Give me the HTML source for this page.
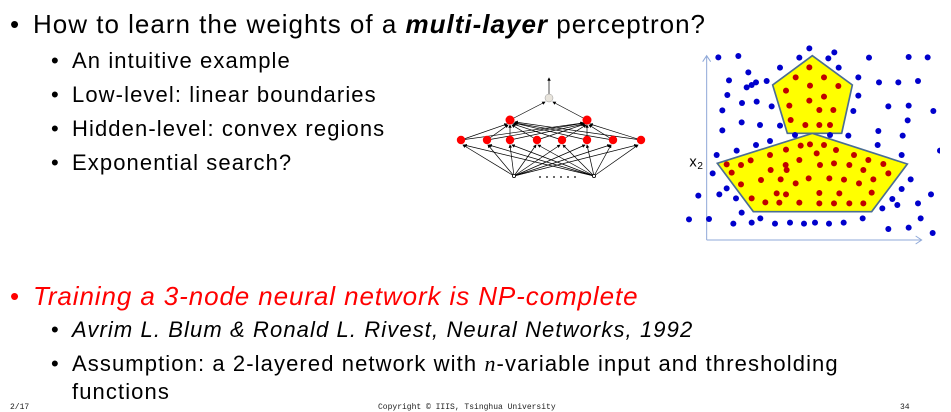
<!DOCTYPE html>
<html><head><meta charset="utf-8"><style>
html,body{margin:0;padding:0;background:#fff;}
body{width:951px;height:411px;position:relative;overflow:hidden;font-family:"Liberation Sans",sans-serif;color:#000;}
.t{position:absolute;white-space:nowrap;line-height:1;}
.b1{font-size:26px;letter-spacing:1px;}
.b2{font-size:22px;letter-spacing:1.1px;}
.ft{position:absolute;font-family:"Liberation Mono",monospace;font-size:8px;top:403px;color:#222;}
</style></head><body>
<div class="t b1" style="left:10px;top:11px;">•</div>
<div class="t b1" style="left:33px;top:11px;">How to learn the weights of a <b><i>multi-layer</i></b> perceptron?</div>
<div class="t b2" style="left:51px;top:50px;">•</div><div class="t b2" style="left:72px;top:50px;">An intuitive example</div>
<div class="t b2" style="left:51px;top:84px;">•</div><div class="t b2" style="left:72px;top:84px;">Low-level: linear boundaries</div>
<div class="t b2" style="left:51px;top:118px;">•</div><div class="t b2" style="left:72px;top:118px;">Hidden-level: convex regions</div>
<div class="t b2" style="left:51px;top:152px;">•</div><div class="t b2" style="left:72px;top:152px;">Exponential search?</div>

<div class="t b1" style="left:10px;top:283px;color:#f00;">•</div>
<div class="t b1" style="left:33px;top:283px;color:#f00;letter-spacing:0.9px;"><i>Training a 3-node neural network is NP-complete</i></div>
<div class="t b2" style="left:51px;top:319px;">•</div><div class="t b2" style="left:72px;top:319px;"><i>Avrim L. Blum &amp; Ronald L. Rivest, Neural Networks, 1992</i></div>
<div class="t b2" style="left:51px;top:353px;">•</div><div class="t b2" style="left:72px;top:353px;">Assumption: a 2-layered network with <i style="font-family:'Liberation Serif',serif;">n</i>-variable input and thresholding</div>
<div class="t b2" style="left:72px;top:381px;">functions</div>
<div class="ft" style="left:10px;">2/17</div>
<div class="ft" style="left:378px;">Copyright © IIIS, Tsinghua University</div>
<div class="ft" style="left:900px;">34</div>

<svg style="position:absolute;left:450px;top:70px" width="220" height="120" viewBox="0 0 220 120">
<defs><marker id="a" markerWidth="5" markerHeight="5" refX="4" refY="2.5" orient="auto"><path d="M0,0L5,2.5L0,5z" fill="#000"/></marker></defs>
<g stroke="#000" stroke-width="0.7" marker-end="url(#a)">
<line x1="99" y1="24" x2="99" y2="8"/>
<line x1="60" y1="50" x2="95" y2="32"/><line x1="137" y1="50" x2="103" y2="32"/>
<line x1="11" y1="70" x2="57" y2="54"/><line x1="37" y1="70" x2="58" y2="55"/><line x1="60" y1="70" x2="60" y2="55"/><line x1="87" y1="70" x2="62" y2="55"/><line x1="112" y1="70" x2="63" y2="54"/><line x1="137" y1="70" x2="64" y2="53"/><line x1="163" y1="70" x2="65" y2="53"/><line x1="191" y1="70" x2="65" y2="52"/>
<line x1="11" y1="70" x2="133" y2="53"/><line x1="37" y1="70" x2="134" y2="53"/><line x1="60" y1="70" x2="134" y2="54"/><line x1="87" y1="70" x2="135" y2="54"/><line x1="112" y1="70" x2="136" y2="55"/><line x1="137" y1="70" x2="137" y2="55"/><line x1="163" y1="70" x2="139" y2="55"/><line x1="191" y1="70" x2="140" y2="54"/>
<line x1="64" y1="106" x2="13" y2="75"/><line x1="64" y1="106" x2="38" y2="75"/><line x1="64" y1="106" x2="60" y2="75"/><line x1="64" y1="106" x2="86" y2="75"/><line x1="64" y1="106" x2="110" y2="75"/><line x1="64" y1="106" x2="135" y2="75"/><line x1="64" y1="106" x2="160" y2="75"/><line x1="64" y1="106" x2="187" y2="75"/>
<line x1="144" y1="106" x2="14" y2="75"/><line x1="144" y1="106" x2="39" y2="75"/><line x1="144" y1="106" x2="62" y2="75"/><line x1="144" y1="106" x2="88" y2="75"/><line x1="144" y1="106" x2="113" y2="75"/><line x1="144" y1="106" x2="137" y2="75"/><line x1="144" y1="106" x2="161" y2="75"/><line x1="144" y1="106" x2="188" y2="75"/>
</g>
<circle cx="99" cy="28" r="4" fill="#e8e4dc" stroke="#999" stroke-width="0.5"/>
<g fill="#f00"><circle cx="60" cy="50" r="4.5"/><circle cx="137" cy="50" r="4.5"/>
<circle cx="11" cy="70" r="4.2"/><circle cx="37" cy="70" r="4.2"/><circle cx="60" cy="70" r="4.2"/><circle cx="87" cy="70" r="4.2"/><circle cx="112" cy="70" r="4.2"/><circle cx="137" cy="70" r="4.2"/><circle cx="163" cy="70" r="4.2"/><circle cx="191" cy="70" r="4.2"/></g>
<circle cx="64" cy="106" r="1.6" fill="#fff" stroke="#000" stroke-width="0.8"/><circle cx="144" cy="106" r="1.6" fill="#fff" stroke="#000" stroke-width="0.8"/>
<g fill="#000"><circle cx="90" cy="107" r="0.9"/><circle cx="97" cy="107" r="0.9"/><circle cx="104" cy="107" r="0.9"/><circle cx="111" cy="107" r="0.9"/><circle cx="118" cy="107" r="0.9"/><circle cx="125" cy="107" r="0.9"/></g>
</svg>

<svg style="position:absolute;left:680px;top:35px" width="260" height="215" viewBox="0 0 780 645">
<g stroke="#8fa8d8" stroke-width="3" fill="none">
<path d="M80,615V62M68,80L80,62L92,80"/><path d="M80,615H725M707,603L725,615L707,627"/>
</g>
<text x="28" y="395" font-family="Liberation Sans,sans-serif" font-size="44">x</text><text x="52" y="402" font-family="Liberation Sans,sans-serif" font-size="30">2</text>
<g fill="#ffff00" stroke="#4a6d94" stroke-width="5">
<polygon points="397,62 517,150 485,295 322,295 278,150"/>
<polygon points="397,295 682,387 575,530 220,530 112,385"/>
</g>
<g fill="#0000cc">
<circle cx="115" cy="67" r="9"/><circle cx="175" cy="63" r="9"/><circle cx="388" cy="40" r="9"/><circle cx="463" cy="52" r="9"/><circle cx="445" cy="70" r="9"/><circle cx="358" cy="68" r="9"/><circle cx="567" cy="68" r="9"/><circle cx="686" cy="66" r="9"/><circle cx="743" cy="67" r="9"/><circle cx="205" cy="112" r="9"/><circle cx="300" cy="98" r="9"/><circle cx="476" cy="98" r="9"/><circle cx="147" cy="136" r="9"/><circle cx="228" cy="142" r="9"/><circle cx="215" cy="150" r="9"/><circle cx="200" cy="157" r="9"/><circle cx="260" cy="138" r="9"/><circle cx="535" cy="127" r="9"/><circle cx="597" cy="142" r="9"/><circle cx="655" cy="142" r="9"/><circle cx="714" cy="138" r="9"/><circle cx="142" cy="180" r="9"/><circle cx="186" cy="204" r="9"/><circle cx="230" cy="200" r="9"/><circle cx="275" cy="214" r="9"/><circle cx="535" cy="182" r="9"/><circle cx="520" cy="228" r="9"/><circle cx="625" cy="214" r="9"/><circle cx="686" cy="212" r="9"/><circle cx="760" cy="228" r="9"/><circle cx="127" cy="226" r="9"/><circle cx="185" cy="262" r="9"/><circle cx="240" cy="270" r="9"/><circle cx="300" cy="272" r="9"/><circle cx="683" cy="256" r="9"/><circle cx="127" cy="286" r="9"/><circle cx="595" cy="288" r="9"/><circle cx="668" cy="302" r="9"/><circle cx="505" cy="302" r="9"/><circle cx="450" cy="300" r="9"/><circle cx="345" cy="300" r="9"/><circle cx="270" cy="318" r="9"/><circle cx="228" cy="330" r="9"/><circle cx="170" cy="347" r="9"/><circle cx="593" cy="330" r="9"/><circle cx="110" cy="360" r="9"/><circle cx="665" cy="360" r="9"/><circle cx="780" cy="347" r="9"/><circle cx="98" cy="415" r="9"/><circle cx="140" cy="460" r="9"/><circle cx="118" cy="478" r="9"/><circle cx="55" cy="482" r="9"/><circle cx="168" cy="490" r="9"/><circle cx="665" cy="462" r="9"/><circle cx="692" cy="433" r="9"/><circle cx="753" cy="478" r="9"/><circle cx="637" cy="492" r="9"/><circle cx="652" cy="510" r="9"/><circle cx="607" cy="520" r="9"/><circle cx="714" cy="505" r="9"/><circle cx="185" cy="533" r="9"/><circle cx="27" cy="553" r="9"/><circle cx="87" cy="552" r="9"/><circle cx="160" cy="566" r="9"/><circle cx="215" cy="563" r="9"/><circle cx="241" cy="550" r="9"/><circle cx="285" cy="566" r="9"/><circle cx="330" cy="563" r="9"/><circle cx="372" cy="566" r="9"/><circle cx="405" cy="563" r="9"/><circle cx="447" cy="566" r="9"/><circle cx="491" cy="563" r="9"/><circle cx="548" cy="550" r="9"/><circle cx="625" cy="582" r="9"/><circle cx="686" cy="578" r="9"/><circle cx="722" cy="550" r="9"/><circle cx="758" cy="594" r="9"/>
</g>
<g fill="#c00000">
<circle cx="388" cy="97" r="9"/><circle cx="347" cy="127" r="9"/><circle cx="432" cy="127" r="9"/><circle cx="318" cy="167" r="9"/><circle cx="390" cy="152" r="9"/><circle cx="475" cy="153" r="9"/><circle cx="432" cy="185" r="9"/><circle cx="388" cy="197" r="9"/><circle cx="328" cy="212" r="9"/><circle cx="418" cy="225" r="9"/><circle cx="460" cy="225" r="9"/><circle cx="332" cy="255" r="9"/><circle cx="376" cy="270" r="9"/><circle cx="418" cy="270" r="9"/><circle cx="450" cy="270" r="9"/>
<circle cx="390" cy="328" r="9"/><circle cx="362" cy="332" r="9"/><circle cx="432" cy="330" r="9"/><circle cx="318" cy="344" r="9"/><circle cx="410" cy="355" r="9"/><circle cx="468" cy="345" r="9"/><circle cx="270" cy="360" r="9"/><circle cx="522" cy="360" r="9"/><circle cx="140" cy="388" r="9"/><circle cx="183" cy="390" r="9"/><circle cx="212" cy="376" r="9"/><circle cx="317" cy="390" r="9"/><circle cx="358" cy="375" r="9"/><circle cx="420" cy="390" r="9"/><circle cx="462" cy="385" r="9"/><circle cx="508" cy="390" r="9"/><circle cx="565" cy="375" r="9"/><circle cx="610" cy="387" r="9"/><circle cx="155" cy="413" r="9"/><circle cx="272" cy="405" r="9"/><circle cx="320" cy="405" r="9"/><circle cx="550" cy="405" r="9"/><circle cx="625" cy="415" r="9"/><circle cx="183" cy="448" r="9"/><circle cx="243" cy="435" r="9"/><circle cx="302" cy="433" r="9"/><circle cx="347" cy="445" r="9"/><circle cx="386" cy="430" r="9"/><circle cx="448" cy="430" r="9"/><circle cx="492" cy="434" r="9"/><circle cx="537" cy="445" r="9"/><circle cx="580" cy="433" r="9"/><circle cx="290" cy="475" r="9"/><circle cx="318" cy="478" r="9"/><circle cx="418" cy="474" r="9"/><circle cx="478" cy="475" r="9"/><circle cx="575" cy="473" r="9"/><circle cx="215" cy="490" r="9"/><circle cx="256" cy="502" r="9"/><circle cx="298" cy="503" r="9"/><circle cx="358" cy="503" r="9"/><circle cx="418" cy="505" r="9"/><circle cx="462" cy="505" r="9"/><circle cx="508" cy="505" r="9"/><circle cx="550" cy="505" r="9"/>
</g>
</svg>
</body></html>
